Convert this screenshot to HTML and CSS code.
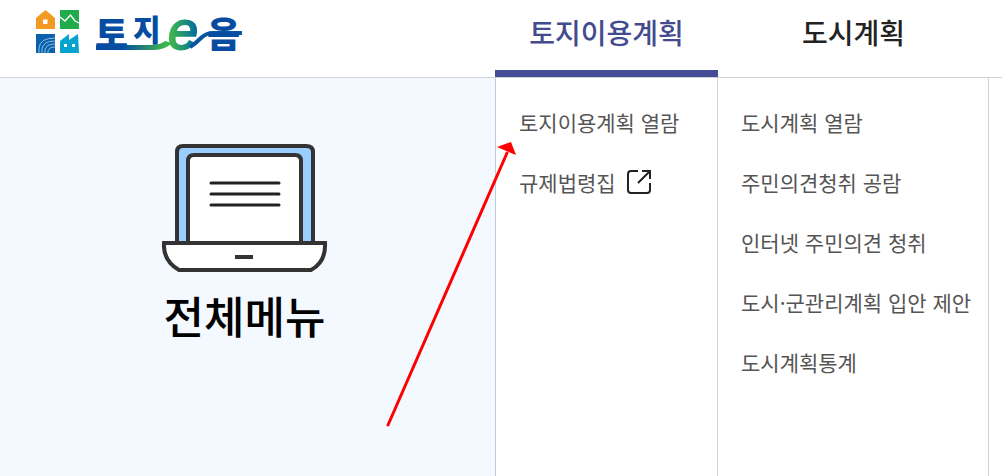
FILE: index.html
```html
<!DOCTYPE html>
<html lang="ko">
    <head>
        <meta charset="utf-8">
        <meta name="viewport" content="width=device-width, initial-scale=1">
        <title>토지e음</title>
        <link rel="stylesheet" href="styles.css">
    </head>
    <body>
        <header class="header">
            <a class="logo" href="#" aria-label="토지e음">
                <svg class="logo-mark" viewBox="0 0 44 44" aria-hidden="true">
                    <path fill="#f39a22" fill-rule="evenodd" d="M9.500 0L19 8V19H0V8ZM7 9.500V14H11.500V9.500Z"/>
                    <path fill="#21ac4b" d="M24 0H43V19H24Z"/>
                    <path fill="none" stroke="#fff" stroke-width="1.300" d="M24 7L29 11L34.500 5L39 11L43 13"/>
                    <path fill="#0860ae" d="M0 24H19V43H0Z"/>
                    <g fill="none" stroke="#8fbde0" stroke-width="1">
                        <path d="M3 43V38Q4 28 19 28"/>
                        <path d="M6 43V39Q7 31 19 31"/>
                        <path d="M9 43V40Q10 34 19 34"/>
                        <path d="M12 43V41Q13 37 19 37"/>
                    </g>
                    <path fill="#06a3cf" d="M24 43V31L33 24V30L42 24L43 43Z"/>
                    <path fill="#fff" d="M28 34H31V37H28ZM36 34H39V37H36Z"/>
                </svg>
                <svg class="logo-word" viewBox="0 0 146 40" aria-hidden="true">
                    <defs>
                        <linearGradient id="line" x1="0" x2="1">
                            <stop offset="0.350" stop-color="#064da2"/>
                            <stop offset="0.900" stop-color="#3fb54f"/>
                        </linearGradient>
                        <linearGradient id="letter" x1="0" x2="1">
                            <stop offset="0.100" stop-color="#3fb54f"/>
                            <stop offset="0.900" stop-color="#04729a"/>
                        </linearGradient>
                    </defs>
                    <text class="word" x="-1" y="33">토</text>
                    <text class="word word-small" x="37" y="26">지</text>
                    <path fill="url(#line)" d="M0 30H56Q64 30 69 26L76 28Q69 35 58 35H0Z"/>
                    <text class="word-e" x="72" y="34">e</text>
                    <path fill="none" stroke="#08569f" stroke-width="4" d="M94 32Q99 29 105 23Q110 18 117 18H146"/>
                    <text class="word" x="111" y="33">음</text>
                </svg>
            </a>
            <nav class="gnb">
                <a class="gnb-item active" href="#">토지이용계획</a>
                <a class="gnb-item" href="#">도시계획</a>
            </nav>
        </header>
        <main class="menu">
            <a class="all-menu" href="#">
                <svg class="laptop" viewBox="0 0 166 130" aria-hidden="true">
                    <g stroke="#333" stroke-width="4">
                        <path fill="#99ceff" d="M15 100V9Q15 3 21 3H144Q151 3 151 9V100Z"/>
                        <path fill="#fff" d="M26 100V18Q26 12 32 12H133Q139 12 139 18V100Z"/>
                        <path fill="#fff" d="M2 100H163Q164 119 149 127H17Q1 118 2 100Z"/>
                        <path d="M73 114H91"/>
                    </g>
                    <path stroke="#222" stroke-width="3" stroke-linecap="round" d="M49 40H117M49 51H117M49 62H117"/>
                </svg>
                <span>전체메뉴</span>
            </a>
            <ul class="sub">
                <li><a href="#">토지이용계획 열람</a></li>
                <li>
                    <a href="#">규제법령집
                        <svg class="outlink" viewBox="0 0 26 26" aria-hidden="true">
                            <path fill="none" stroke="#222" stroke-width="2" d="M12 2H5Q2 2 2 5V21Q2 24 5 24H21Q24 24 24 21V14M16 2H24V10M24 2L12 14"/>
                        </svg>
                    </a>
                </li>
            </ul>
            <ul class="sub">
                <li><a href="#">도시계획 열람</a></li>
                <li><a href="#">주민의견청취 공람</a></li>
                <li><a href="#">인터넷 주민의견 청취</a></li>
                <li><a href="#">도시·군관리계획 입안 제안</a></li>
                <li><a href="#">도시계획통계</a></li>
            </ul>
        </main>
        <svg class="arrow" viewBox="0 0 132 286" aria-hidden="true">
            <path fill="none" stroke="#f00" stroke-width="3" stroke-linecap="round" d="M2 284L121 12"/>
            <path fill="#f00" d="M125 1L111 6L130 14Z"/>
        </svg>
    </body>
</html>
```

FILE: styles.css
```css
*
{
    box-sizing: border-box;
}
body
{
    margin: 0;
    min-height: 100vh;
    display: flex;
    flex-direction: column;
    position: relative;
    background: white;
    font-family: "Noto Sans CJK KR", sans-serif;
    color: #222;
}
a
{
    color: inherit;
    text-decoration: none;
}
.header,
.menu
{
    display: grid;
    grid-template-columns: 495fr 223fr 271fr 13fr;
}
.header
{
    height: 78px;
    border-bottom: 1px solid #d0d0d0;
}
.logo
{
    display: flex;
    align-items: flex-start;
    gap: 16px;
    padding: 10px 0 0 36px;
}
.logo-mark
{
    width: 44px;
    height: 44px;
}
.logo-word
{
    width: 146px;
    height: 40px;
    margin-top: 5px;
    overflow: visible;
}
.word
{
    font-size: 36px;
    font-weight: 900;
    fill: #064da2;
}
.word-small
{
    font-size: 30px;
}
.word-e
{
    font-family: "Liberation Sans", sans-serif;
    font-size: 54px;
    font-style: italic;
    fill: url(#letter);
    stroke: url(#letter);
    stroke-width: 2px;
}
.gnb
{
    display: grid;
    grid-template-columns: subgrid;
    grid-column: 2 / 4;
}
.gnb-item
{
    padding-top: 12px;
    font-size: 28px;
    font-weight: 500;
    line-height: 40px;
    text-align: center;
}
.gnb-item.active
{
    color: #434b8f;
    border-bottom: 7px solid #434c95;
}
.menu
{
    flex: 1;
}
.all-menu
{
    display: flex;
    flex-direction: column;
    align-items: center;
    padding: 65px 6px 0 0;
    background: #f4f9ff;
    color: black;
    font-size: 44px;
    font-weight: 500;
    line-height: 60px;
}
.laptop
{
    width: 166px;
    height: 130px;
    margin-bottom: 12px;
}
.sub
{
    margin: 0;
    padding: 14px 0 0 23px;
    border-right: 1px solid #d0d0d0;
    list-style: none;
    font-size: 21px;
    line-height: 60px;
    color: #555;
    white-space: nowrap;
}
.sub:first-of-type
{
    border-left: 1px solid #bccbe0;
}
.sub a
{
    display: flex;
    align-items: center;
    gap: 10px;
}
.outlink
{
    width: 26px;
    height: 26px;
}
/* pointer to the first submenu entry */
.arrow
{
    position: absolute;
    left: 386px;
    top: 141px;
    width: 132px;
    height: 286px;
    pointer-events: none;
}
```
